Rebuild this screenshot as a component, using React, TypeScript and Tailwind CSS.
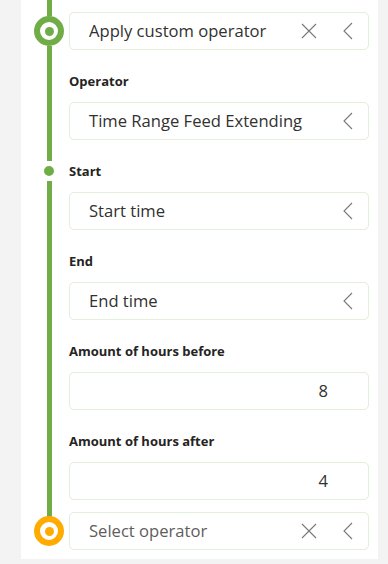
import React from 'react';

const GREEN = 'bg-[#70ad47]';

function XIcon() {
  return (
    <svg width="16" height="16" viewBox="0 0 16 16" className="text-[#7a7876]">
      <path d="M1 1 L15 15 M15 1 L1 15" stroke="currentColor" strokeWidth="1.1" fill="none" />
    </svg>
  );
}

function ChevronIcon() {
  return (
    <svg width="10" height="18" viewBox="0 0 10 18" className="text-[#7a7876]">
      <path d="M9 1 L1 9 L9 17" stroke="currentColor" strokeWidth="1.1" fill="none" />
    </svg>
  );
}

function Box({
  text,
  placeholder,
  clear,
  chevron,
  align,
}: {
  text: string;
  placeholder?: boolean;
  clear?: boolean;
  chevron?: boolean;
  align?: 'right';
}) {
  return (
    <div className="h-[38px] flex items-center rounded-[5px] border border-[#e2efda] bg-white">
      <span
        className={
          align === 'right'
            ? 'flex-1 text-right pr-[40px] text-[16.6px] text-[#323130]'
            : 'flex-1 pl-[19px] text-[16.6px] ' + (placeholder ? 'text-[#5f5d5b]' : 'text-[#323130]')
        }
      >
        {text}
      </span>
      {clear && (
        <span className="w-[16px] flex items-center justify-center mr-[26px]">
          <XIcon />
        </span>
      )}
      {chevron && (
        <span className="flex items-center mr-[15px]">
          <ChevronIcon />
        </span>
      )}
    </div>
  );
}

function Line({ className }: { className?: string }) {
  return <div className={'w-[5px] ' + GREEN + ' ' + (className || '')} />;
}

function Ring({ color }: { color: 'green' | 'orange' }) {
  const border = color === 'green' ? 'border-[#70ad47]' : 'border-[#ffab00]';
  const dot = color === 'green' ? 'bg-[#70ad47]' : 'bg-[#ffab00]';
  return (
    <div className={'w-[30px] h-[30px] shrink-0 rounded-full border-[6px] bg-white flex items-center justify-center ' + border}>
      <div className={'w-[9px] h-[9px] rounded-full ' + dot} />
    </div>
  );
}

function Gutter({ children }: { children: React.ReactNode }) {
  return (
    <div className="w-[48px] shrink-0 pl-[13px] pr-[5px]">
      <div className="w-[30px] h-full flex flex-col items-center">{children}</div>
    </div>
  );
}

function Field({ label, children, dot }: { label: string; children: React.ReactNode; dot?: boolean }) {
  return (
    <div className="flex">
      <Gutter>
        {dot ? (
          <>
            <Line className="h-[21px]" />
            <div className="w-[20px] h-[20px] rounded-full border-[5px] border-white bg-[#70ad47]" />
            <Line className="flex-1" />
          </>
        ) : (
          <Line className="flex-1" />
        )}
      </Gutter>
      <div className="flex-1 pt-[22px]">
        <div className="h-[20px] flex items-center text-[13px] font-bold text-[#252423]">{label}</div>
        <div className="mt-[10px]">{children}</div>
      </div>
    </div>
  );
}

export default function App() {
  return (
    <div
      className="min-h-[564px] bg-[#f3f3f3] pl-[21px] pr-[10px]"
      style={{ fontFamily: '"Open Sans", "Noto Sans", sans-serif' }}
    >
      <div className="bg-white pr-[9px] pb-[9px]">
        <div className="flex">
          <Gutter>
            <Line className="h-[16px]" />
            <Ring color="green" />
            <Line className="flex-1" />
          </Gutter>
          <div className="flex-1 pt-[12px]">
            <Box text="Apply custom operator" clear chevron />
          </div>
        </div>

        <Field label="Operator">
          <Box text="Time Range Feed Extending" chevron />
        </Field>
        <Field label="Start" dot>
          <Box text="Start time" chevron />
        </Field>
        <Field label="End">
          <Box text="End time" chevron />
        </Field>
        <Field label="Amount of hours before">
          <Box text="8" align="right" />
        </Field>
        <Field label="Amount of hours after">
          <Box text="4" align="right" />
        </Field>

        <div className="flex">
          <Gutter>
            <Line className="h-[20px]" />
            <div className="-mt-[4px]">
              <Ring color="orange" />
            </div>
          </Gutter>
          <div className="flex-1 pt-[12px]">
            <Box text="Select operator" placeholder clear chevron />
          </div>
        </div>
      </div>
    </div>
  );
}
